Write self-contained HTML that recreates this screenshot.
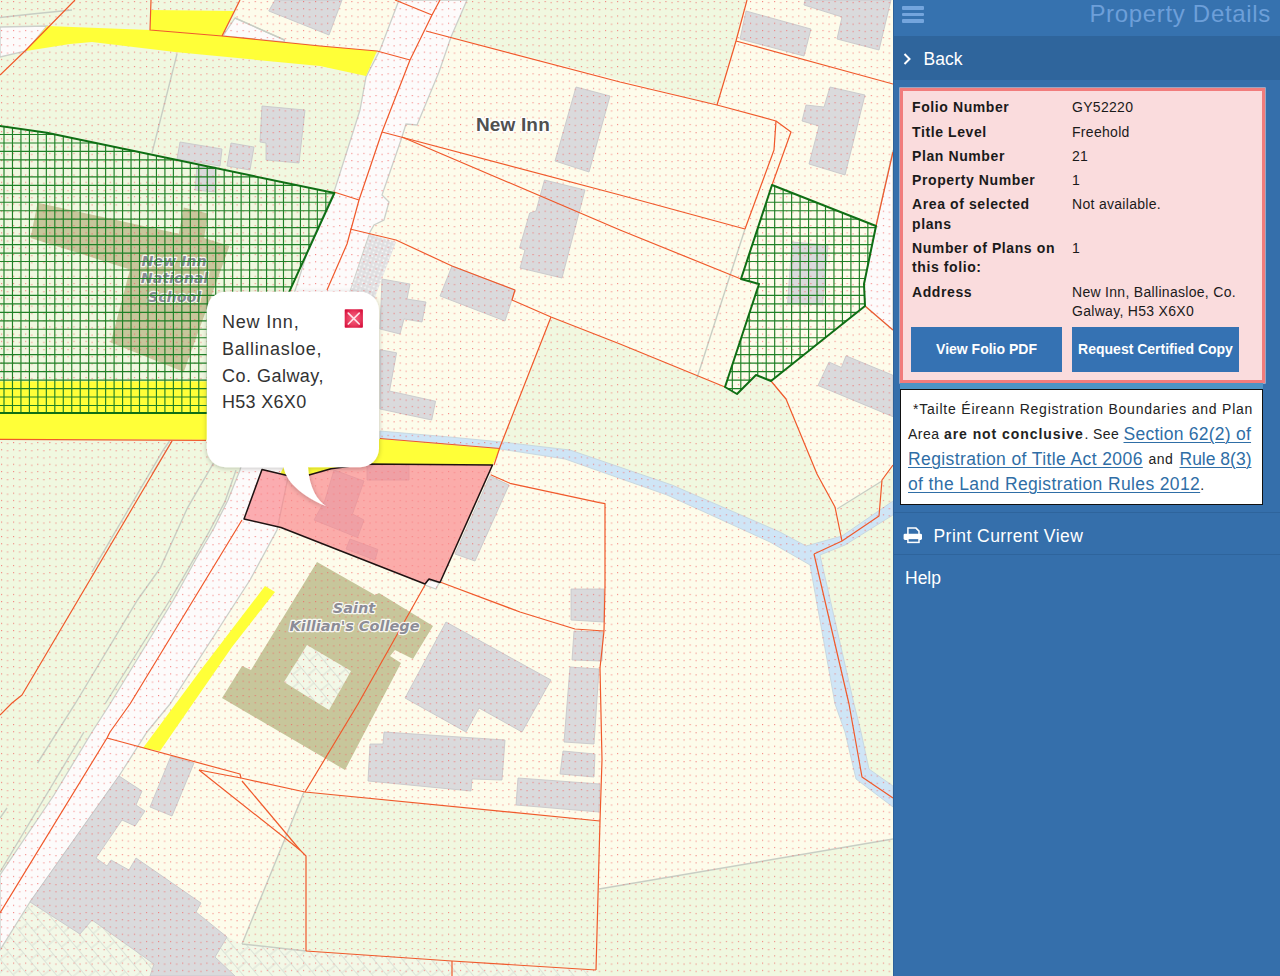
<!DOCTYPE html>
<html lang="en">
<head>
<meta charset="utf-8">
<title>Property Details</title>
<style>
html,body{margin:0;padding:0;}
body{width:1280px;height:976px;overflow:hidden;position:relative;background:#fdfbe8;font-family:"Liberation Sans",sans-serif;}
#map{position:absolute;left:0;top:0;width:893px;height:976px;overflow:hidden;}
#map svg{position:absolute;left:0;top:0;}
#panel{position:absolute;left:893px;top:0;width:387px;height:976px;background:#356fab;color:#fff;box-sizing:border-box;border-left:1px solid #2d6199;}
#hdr{position:absolute;left:0;top:0;width:100%;height:36px;background:#3672af;}
#hdr .burger{position:absolute;left:8px;top:6px;width:22px;height:17px;}
#hdr .burger i{position:absolute;left:0;width:22px;height:3.5px;background:#74a5dd;border-radius:1px;}
#hdr .ttl{position:absolute;right:9px;top:0;line-height:28.500px;font-size:24px;letter-spacing:0.68px;color:#6d9fd9;white-space:nowrap;}
#back{position:absolute;left:0;top:36px;width:100%;height:44px;background:#2f659c;}
#back .t{position:absolute;left:29.500px;top:0;line-height:47px;font-size:17.5px;color:#fff;}
#back svg{position:absolute;left:9px;top:17px;}
#pink{position:absolute;left:6px;top:88px;width:365px;height:294.500px;box-sizing:border-box;border:3px solid #f17c7c;box-shadow:0 0 0 0.7px rgba(250,215,215,0.75);background:#fadcdd;color:#1a1a1a;}
.row{position:absolute;left:9px;font-size:14px;line-height:19.5px;}
.row b{position:absolute;left:0;top:0;width:158px;font-weight:bold;letter-spacing:0.6px;}
.row span{position:absolute;left:160px;top:0;width:190px;letter-spacing:0.3px;}
.btn{position:absolute;top:236px;height:45px;background:#3572b3;color:#fff;font-weight:bold;font-size:14px;line-height:45px;text-align:center;white-space:nowrap;}
#note{position:absolute;left:6px;top:389px;width:363px;height:116px;box-sizing:border-box;border:1.5px solid #111;background:#fff;color:#222;font-size:14px;}
#note a{color:#2f6ea6;text-decoration:underline;font-size:17.5px;text-decoration-thickness:1px;text-underline-offset:2px;}
#note div{position:absolute;left:7px;white-space:nowrap;line-height:25px;height:25px;}
#note .l1{left:14px;top:7.4px;}
#note .l2{top:32px;}
#note .l3{top:57px;}
#note .l4{top:82px;}
#strip{position:absolute;left:6px;top:383px;width:363px;height:7px;background:#4d94c5;}
.mi{position:absolute;left:0;width:100%;height:42px;border-top:1px solid #2e649c;font-size:17.5px;line-height:47px;color:#fff;}
</style>
</head>
<body>
<div id="map">
<svg id="mapsvg" width="893" height="976" viewBox="0 0 893 976">
<defs>
<pattern id="dots" width="12.08" height="7.23" patternUnits="userSpaceOnUse" x="1" y="1">
<rect x="0" y="0" width="1.1" height="1.1" fill="#f25f5f" opacity="0.78"/>
<rect x="6.04" y="1" width="1.1" height="1.1" fill="#f25f5f" opacity="0.78"/>
</pattern>
<pattern id="pave" width="20" height="22" patternUnits="userSpaceOnUse" patternTransform="rotate(50)"><rect width="20" height="22" fill="#f2f8e7"/><path d="M0 0.500H20M0 11.500H20M5 0V11.500M15 11.500V22" stroke="#dde3d8" stroke-width="1.1" fill="none"/></pattern>
<pattern id="grid" width="8.3" height="8.3" patternUnits="userSpaceOnUse" x="2" y="2"><path d="M0 0.500H8.3M0.500 0V8.3" stroke="#0c6b12" stroke-width="1.1" fill="none"/></pattern>
<filter id="pshadow" x="-10%" y="-10%" width="120%" height="125%"><feDropShadow dx="0" dy="1" stdDeviation="2.5" flood-color="#000" flood-opacity="0.24"/></filter>
<radialGradient id="xg" cx="0.5" cy="0.5" r="0.62"><stop offset="0" stop-color="#f4647f"/><stop offset="0.55" stop-color="#ea3f62"/><stop offset="1" stop-color="#d70f3b"/></radialGradient>
<pattern id="tex" width="4" height="4" patternUnits="userSpaceOnUse" patternTransform="rotate(20)"><rect width="4" height="4" fill="#dfdfe1"/><rect x="0.500" y="0.500" width="1.7" height="1.7" fill="#f8f8f8"/></pattern>
</defs>
<!--MAPSTART-->
<rect width="893" height="976" fill="#fdfceb"/>
<polygon points="0,0 399,0 380,50 366,77 360,110 334,192 290,290 240,400 240,470 228,500 214,528 196,559 173.4,600 110,704 92,732 54,795 0,875" fill="#f0f8e0"/>
<polygon points="239,0 401,0 392,22 380,51 378,51.6 284.4,41 284.4,40 235,18" fill="#fdfceb"/>
<polygon points="467,0 747,0 736,41 717,105 451,37" fill="#f0f8e0"/>
<polygon points="551,317 620,344 725,387 737,394 756,375 771,381 786,399 817,474 835,507 842,541 806,546 780,532 672,485 580,460 520,445 500,447" fill="#f0f8e0"/>
<polygon points="837,510 882.6,480.3 893,465 893,503 842,537 842,541" fill="#f0f8e0"/>
<polygon points="820,555 845,545 893,515 893,786 869,769 861,732 854,704" fill="#f0f8e0"/>
<polygon points="304,792 600,821 599,889 893,839 893,976 235,976 242,944" fill="#f0f8e0"/>
<polygon points="30,902 80,934 92,920 154,964 150,976 0,976 0,950" fill="url(#pave)"/>
<polygon points="227,937 242,944 306,951 452,961 596,970 596,976 235,976 215,957" fill="url(#pave)"/>
<polygon points="304,792 242,944 307,951 306,856 300,850" fill="#f0f8e0"/>
<polygon points="399,0 467,0 451,37 439,72 417,125 406,124 401,140 382,195 389,202 384,220 374,225 370,232 350,292 330,340 300,420 277,530 250,580 170,704 147,732 119,776 30,902 0,950 0,875 54,795 92,732 110,704 173.4,600 196,559 214,528 228,500 240,470 260,400 310,244 334,192 360,110 366,77 380,50" fill="#fdfbfb" stroke="#ccd0ca" stroke-width="1.3"/>
<polygon points="0,27 47,26 26,51 0,57" fill="#fdfbfb" stroke="#ccd0ca" stroke-width="1.3"/>
<polygon points="235,18 284.4,40 284.4,42 223,36" fill="#fdfbfb" stroke="#ccd0ca" stroke-width="1.3"/>
<polygon points="893,150 876,226 864,284 865,306 893,330" fill="#fdfbfb" stroke="#ccd0ca" stroke-width="1.3"/>
<polygon points="427,579.5 439,583 436,589 425,585" fill="#fdfbfb" stroke="#ccd0ca" stroke-width="1.3"/>
<polygon points="380,431 450,437 502,442 570,450 672,485 780,532 806,546 842,536 893,501 893,515 845,545 820,555 854,704 861,732 869,769 893,786 893,807 856,779 845,732 835,704 810,565 770,542 667,495 565,459 500,449 380,439" fill="#cfe5f6" stroke="#c3d3dc" stroke-width="0.8"/>
<polygon points="275,0 342,0 329,35 268.75,11" fill="#dadadc" stroke="#c4c4c8" stroke-width="0.8"/>
<polygon points="262,106 305,110 299,163 266,160 266,143 260,142" fill="#dadadc" stroke="#c4c4c8" stroke-width="0.8"/>
<polygon points="180,142 222,149 220,166 177,159" fill="#dadadc" stroke="#c4c4c8" stroke-width="0.8"/>
<polygon points="231,143 254,147 250,170 227,166" fill="#dadadc" stroke="#c4c4c8" stroke-width="0.8"/>
<polygon points="197,166 216,167 215,192 195,190" fill="#dadadc" stroke="#c4c4c8" stroke-width="0.8"/>
<polygon points="576,87 610,96 589,172 555,161" fill="#dadadc" stroke="#c4c4c8" stroke-width="0.8"/>
<polygon points="544.5,180 585,190 562,278 520,268 525,250 519.5,248 529.7,213 536,211" fill="#dadadc" stroke="#c4c4c8" stroke-width="0.8"/>
<polygon points="746,11 811,29 804,56 740,39" fill="#dadadc" stroke="#c4c4c8" stroke-width="0.8"/>
<polygon points="805,0 891,0 879,50 837,39 842,17 804,5" fill="#dadadc" stroke="#c4c4c8" stroke-width="0.8"/>
<polygon points="830,87 865,95 845,175 809,164 819,126 802,121 806,105 824,107" fill="#dadadc" stroke="#c4c4c8" stroke-width="0.8"/>
<polygon points="382,279 410,284 407,299 426,302 422,322 404,319 400,334 380,329" fill="#dadadc" stroke="#c4c4c8" stroke-width="0.8"/>
<polygon points="380,349.7 396.6,352.8 389.5,391 435.6,401.25 431.7,420 380,409" fill="#dadadc" stroke="#c4c4c8" stroke-width="0.8"/>
<polygon points="452,266 515,290 505,321 440,296" fill="#dadadc" stroke="#c4c4c8" stroke-width="0.8"/>
<polygon points="490,476 509,485 475,561 455,554" fill="#dadadc" stroke="#c4c4c8" stroke-width="0.8"/>
<polygon points="446,622 551,680 522,732 479,708 466,732 405,698" fill="#dadadc" stroke="#c4c4c8" stroke-width="0.8"/>
<polygon points="384,732 505,740 502,780 472,779 471,791 368,781 370,744 383,744" fill="#dadadc" stroke="#c4c4c8" stroke-width="0.8"/>
<polygon points="571,589 604,589 604,622 571,620" fill="#dadadc" stroke="#c4c4c8" stroke-width="0.8"/>
<polygon points="574,631 603,632 602,661 572,660" fill="#dadadc" stroke="#c4c4c8" stroke-width="0.8"/>
<polygon points="570,667 599,669 594,744 564,742" fill="#dadadc" stroke="#c4c4c8" stroke-width="0.8"/>
<polygon points="563,751 595,754 594,777 560,774" fill="#dadadc" stroke="#c4c4c8" stroke-width="0.8"/>
<polygon points="518,778 600,784 599,812 516,805" fill="#dadadc" stroke="#c4c4c8" stroke-width="0.8"/>
<polygon points="171,756 194,763 172,816 150,807" fill="#dadadc" stroke="#c4c4c8" stroke-width="0.8"/>
<polygon points="119,776 142,791 136,805 145,811 135,826 122,820 96,858 107,866 111,860 129,870 136,858 201,903 196,912 227,937 215,957 235,976 150,976 154,964 92,920 80,934 30,902" fill="#dadadc" stroke="#c4c4c8" stroke-width="0.8"/>
<polygon points="792,242 828,245 822.5,305 787.6,303" fill="#dadadc" stroke="#c4c4c8" stroke-width="0.8"/>
<polygon points="829,362 841.4,367.5 846,355.8 893,375.3 893,416.7 818,385.5" fill="#dadadc" stroke="#c4c4c8" stroke-width="0.8"/>
<polygon points="367,465 409,465 409,480 367,480" fill="#dadadc" stroke="#c4c4c8" stroke-width="0.8"/>
<polygon points="334,470 364,481 352.5,514 364,520 357.5,537.5 314,520 325,500" fill="#dadadc" stroke="#c4c4c8" stroke-width="0.8"/>
<polygon points="350,539 378,549.5 375,560 346,549" fill="#dadadc" stroke="#c4c4c8" stroke-width="0.8"/>
<polygon points="370,234 396,242 381,281 374,300 350,292" fill="url(#tex)"/>
<polygon points="317,562 375,595 379,593 433,626 413,659 395,650 390,656 401,663 345,770 222,698 242,666 251,670" fill="#c7c69b"/>
<polygon points="307,645 351,671 329,710 284,682" fill="url(#pave)"/>
<polygon points="37.6,202.7 178.8,233.8 183.8,207.4 208.2,213.5 204.1,238 229.5,246 183.8,372 110.7,342.5 130,269.4 30.5,237.9" fill="#c7c69b"/>
<g fill="none" stroke="#c8cec4" stroke-width="1.4">
<polyline points="177,54 152,153"/>
<polyline points="0,17.5 32,14 72,10"/>
<polyline points="235,18 284.4,40"/>
<polyline points="172,441 152,474"/>
<polyline points="169.6,441 163.3,450 100,557.8 92,572"/>
<polyline points="213.3,463.3 187.5,507.8 160.5,567.6 137.5,600 75,704 37.5,763"/>
<polyline points="236,470.3 225,501.6 209.4,531.25 188.9,567.6 170,600 105,704"/>
<polyline points="837,509 882,481"/>
<polyline points="599,889 893,839"/>
<polyline points="304,792 242,944"/>
<polyline points="745,229 697,378"/>
<polyline points="242,944 306,951"/>
<polyline points="7,808 0,818"/>
<polyline points="84,732 0,872"/>
</g>
<rect width="893" height="976" fill="url(#dots)"/>
<g font-family="'DejaVu Sans',sans-serif" font-weight="bold" font-style="italic" font-size="14.2" fill="#8c8c96" stroke="#fff" stroke-opacity="0.9" stroke-width="2.4" paint-order="stroke" stroke-linejoin="round" text-anchor="middle">
<text x="174" y="266.300">New Inn</text><text x="174.500" y="283">National</text><text x="174.500" y="301.500">School</text>
</g>
<g fill="#ffff38">
<polygon points="47,26 150,30 222,36 320,46 377,51 366,76 320,66 175,52 92,42 70,44 26,51"/>
<polygon points="151,10 234,11 222,36 150,30"/>
<polygon points="0,381.2 290,381.2 290,440 0,439"/>
<polygon points="300,437 380,439 500,449 492.5,465 366.6,463.9 331,468.7 309,475 300,478.5 280,474"/>
<polygon points="265,586 275,592 232,647 160,751 143,748 200,671"/>
</g>
<g fill="none" stroke="#f0592b" stroke-width="1.2" stroke-linejoin="round">
<polyline points="75,0 25,51 0,75"/>
<polyline points="151,0 150,30 222,36 320,46 377,51 410,60"/>
<polyline points="240,0 222,36"/>
<polyline points="440,0 432,15 410,60 382,132 359,200 347,244 327,290"/>
<polyline points="395,0 432,15"/>
<polyline points="426,31 620,82 717,105 776,121 791,132 772,185"/>
<polyline points="382,132 620,195 745,229"/>
<polyline points="402,137 620,230 741,279"/>
<polyline points="334,192 359,200"/>
<polyline points="350,229 396,240 452,266 515,290 512,300 551,317 620,344 725,387"/>
<polyline points="551,317 500,447 494,465"/>
<polyline points="747,0 736,41 717,105"/>
<polyline points="736,41 893,84"/>
<polyline points="776,121 774,150 745,229"/>
<polyline points="893,152 876,226"/>
<polyline points="771,381 786,399 817,474 835,507 842,541"/>
<polyline points="865,306 893,330"/>
<polyline points="814,554 849,704 854,732 862,777 893,798"/>
<polyline points="814,554 842,541 879,516 882,480 893,465"/>
<polyline points="490.7,474.7 510,483.3 599.4,502.6 605,503.6 605,585 604,631 600,668 602,760 600,821 596,970"/>
<polyline points="440,582 520,612 575,629 604,631"/>
<polyline points="425,585 358,704 305,792"/>
<polyline points="0,439.3 206,440.3"/>
<polyline points="172,441 22,695 12,703 0,715"/>
<polyline points="242,520 130,704 110,732 107,738 0,913"/>
<polyline points="107,738 240,774 241,778 305,792 600,821"/>
<polyline points="199,770 241,778"/>
<polyline points="199,770 300,850 306,856 306,951"/>
<polyline points="242,781 300,850"/>
<polyline points="306,951 452,961 596,970"/>
<polyline points="452,961 452,976"/>
<polyline points="380,438.5 500,448.5"/>
</g>
<clipPath id="h1"><polygon points="-2,125.6 46.9,132.8 334.4,193 289.8,290.6 234.5,413 -2,413"/></clipPath>
<g clip-path="url(#h1)" stroke="#1f8026" stroke-width="1.15">
<path d="M-12.94 123.6V415M-4.47 123.6V415M4 123.6V415M12.47 123.6V415M20.94 123.6V415M29.41 123.6V415M37.88 123.6V415M46.34 123.6V415M54.81 123.6V415M63.28 123.6V415M71.75 123.6V415M80.22 123.6V415M88.69 123.6V415M97.16 123.6V415M105.63 123.6V415M114.1 123.6V415M122.57 123.6V415M131.03 123.6V415M139.5 123.6V415M147.97 123.6V415M156.44 123.6V415M164.91 123.6V415M173.38 123.6V415M181.85 123.6V415M190.32 123.6V415M198.79 123.6V415M207.26 123.6V415M215.72 123.6V415M224.19 123.6V415M232.66 123.6V415M241.13 123.6V415M249.6 123.6V415M258.07 123.6V415M266.54 123.6V415M275.01 123.6V415M283.48 123.6V415M291.95 123.6V415M300.41 123.6V415M308.88 123.6V415M317.35 123.6V415M325.82 123.6V415M334.29 123.6V415M342.76 123.6V415M-4 109.08H336.4M-4 117.55H336.4M-4 126.02H336.4M-4 134.48H336.4M-4 142.95H336.4M-4 151.42H336.4M-4 159.89H336.4M-4 168.36H336.4M-4 176.83H336.4M-4 185.3H336.4M-4 193.77H336.4M-4 202.24H336.4M-4 210.71H336.4M-4 219.17H336.4M-4 227.64H336.4M-4 236.11H336.4M-4 244.58H336.4M-4 253.05H336.4M-4 261.52H336.4M-4 269.99H336.4M-4 278.46H336.4M-4 286.93H336.4M-4 295.4H336.4M-4 303.86H336.4M-4 312.33H336.4M-4 320.8H336.4M-4 329.27H336.4M-4 337.74H336.4M-4 346.21H336.4M-4 354.68H336.4M-4 363.15H336.4M-4 371.62H336.4M-4 380.09H336.4M-4 388.55H336.4M-4 397.02H336.4M-4 405.49H336.4M-4 413.96H336.4" fill="none"/>
</g>
<polygon points="-2,125.6 46.9,132.8 334.4,193 289.8,290.6 234.5,413 -2,413" fill="none" stroke="#0f6e14" stroke-width="2" stroke-linejoin="round"/>
<clipPath id="h2"><polygon points="772,185 876,226 864,284 865,306 771,381 756,375 737,394 725,387 759,284 741,279"/></clipPath>
<g clip-path="url(#h2)" stroke="#1f8026" stroke-width="1.15">
<path d="M715.4 183V396M723.86 183V396M732.33 183V396M740.8 183V396M749.27 183V396M757.74 183V396M766.21 183V396M774.68 183V396M783.15 183V396M791.62 183V396M800.09 183V396M808.55 183V396M817.02 183V396M825.49 183V396M833.96 183V396M842.43 183V396M850.9 183V396M859.37 183V396M867.84 183V396M876.31 183V396M723 168.36H878M723 176.83H878M723 185.3H878M723 193.77H878M723 202.24H878M723 210.71H878M723 219.17H878M723 227.64H878M723 236.11H878M723 244.58H878M723 253.05H878M723 261.52H878M723 269.99H878M723 278.46H878M723 286.93H878M723 295.4H878M723 303.86H878M723 312.33H878M723 320.8H878M723 329.27H878M723 337.74H878M723 346.21H878M723 354.68H878M723 363.15H878M723 371.62H878M723 380.09H878M723 388.55H878M723 397.02H878" fill="none"/>
</g>
<polygon points="772,185 876,226 864,284 865,306 771,381 756,375 737,394 725,387 759,284 741,279" fill="none" stroke="#0f6e14" stroke-width="2" stroke-linejoin="round"/>
<polygon points="262,469.5 300,478.5 309,475 331,468.7 366.6,463.9 492.5,465 440,582.5 429,579 425,584 281,527.5 244,519" fill="#fb8187" fill-opacity="0.65" stroke="#1f1212" stroke-width="1.5" stroke-linejoin="round"/>
<g font-family="'Liberation Sans',sans-serif" font-weight="bold" font-size="19" letter-spacing="0.15" fill="#505050" stroke="#fff" stroke-width="3" paint-order="stroke" stroke-linejoin="round"><text x="476" y="131">New Inn</text></g>
<g font-family="'DejaVu Sans',sans-serif" font-weight="bold" font-style="italic" font-size="14.5" fill="#8c8c96" stroke="#fff" stroke-opacity="0.9" stroke-width="2.4" paint-order="stroke" stroke-linejoin="round" text-anchor="middle">
<text x="354" y="613">Saint</text><text x="354.500" y="630.500">Killian's College</text>
</g>
<g filter="url(#pshadow)"><path d="M225.800 291.800H360a19 19 0 0 1 19 19V448.200a19 19 0 0 1 -19 19H308C309.500 488 317 500 326.300 506.300C293 492 285 476 283.700 467.200H225.800a19 19 0 0 1 -19 -19V310.800a19 19 0 0 1 19 -19Z" fill="#fff"/></g>
<g font-family="'Liberation Sans',sans-serif" font-size="18" fill="#333"><text x="222" y="327.700" letter-spacing="0.8">New Inn,</text><text x="222" y="354.800" letter-spacing="0.67">Ballinasloe,</text><text x="222" y="381.600" letter-spacing="0.48">Co. Galway,</text><text x="222" y="408" letter-spacing="0.3">H53 X6X0</text></g>
<rect x="344.700" y="309.300" width="18.200" height="18.400" rx="0.8" fill="url(#xg)"/><path d="M348.300 313.200L359.200 324M359.200 313.200L348.300 324" stroke="#ffe3e9" stroke-width="1.7" stroke-linecap="round" fill="none"/>

<!--MAPEND-->
</svg>
</div>
<div id="panel">
<div id="hdr"><div class="burger"><i style="top:0"></i><i style="top:6.5px"></i><i style="top:13px"></i></div><div class="ttl">Property Details</div></div>
<div id="back"><svg width="9" height="12" viewBox="0 0 9 12"><path d="M1.5 1 L6.5 6 L1.5 11" fill="none" stroke="#fff" stroke-width="2"/></svg><div class="t">Back</div></div>
<div id="pink">
<div class="row" style="top:7.4px"><b>Folio Number</b><span>GY52220</span></div>
<div class="row" style="top:31.6px"><b>Title Level</b><span>Freehold</span></div>
<div class="row" style="top:55.7px"><b>Plan Number</b><span>21</span></div>
<div class="row" style="top:79.9px"><b>Property Number</b><span>1</span></div>
<div class="row" style="top:104.1px"><b>Area of selected plans</b><span>Not available.</span></div>
<div class="row" style="top:147.9px"><b>Number of Plans on this folio:</b><span>1</span></div>
<div class="row" style="top:191.8px"><b>Address</b><span>New Inn, Ballinasloe, Co. Galway, H53 X6X0</span></div>
<div class="btn" style="left:8px;width:151px;">View Folio PDF</div>
<div class="btn" style="left:169px;width:167px;">Request Certified Copy</div>
</div>
<div id="strip"></div>
<div id="note"><div class="l1" style="left:12px;letter-spacing:0.78px">*Tailte Éireann Registration Boundaries and Plan</div><div class="l2"><span style="letter-spacing:0.5px">Area</span></div><div class="l2" style="left:43px"><b style="letter-spacing:0.93px">are not conclusive</b></div><div class="l2" style="left:183.500px;letter-spacing:0.4px">. See</div><div class="l2" style="left:222.500px"><a style="letter-spacing:0.25px">Section 62(2) of</a></div><div class="l3"><a style="letter-spacing:0.4px">Registration of Title Act 2006</a></div><div class="l3" style="left:247.500px;letter-spacing:0.5px">and</div><div class="l3" style="left:278.500px"><a>Rule 8(3)</a></div><div class="l4"><a style="letter-spacing:0.37px">of the Land Registration Rules 2012</a>.</div></div>
<div class="mi" style="top:512px"><svg style="position:absolute;left:0;top:0" width="40" height="42" viewBox="894 513 40 42"><rect x="903.600" y="533.700" width="18.400" height="6.200" rx="1.4" fill="#fff"/><path d="M907.900 534V528.100H916L919 531.100V534" fill="none" stroke="#fff" stroke-width="1.5"/><rect x="907.900" y="538.400" width="11.100" height="4" fill="#356fab" stroke="#fff" stroke-width="1.5"/></svg><span style="position:absolute;left:39.500px;letter-spacing:0.45px">Print Current View</span></div>
<div class="mi" style="top:554px"><span style="position:absolute;left:11px;">Help</span></div>
</div>
</body>
</html>
